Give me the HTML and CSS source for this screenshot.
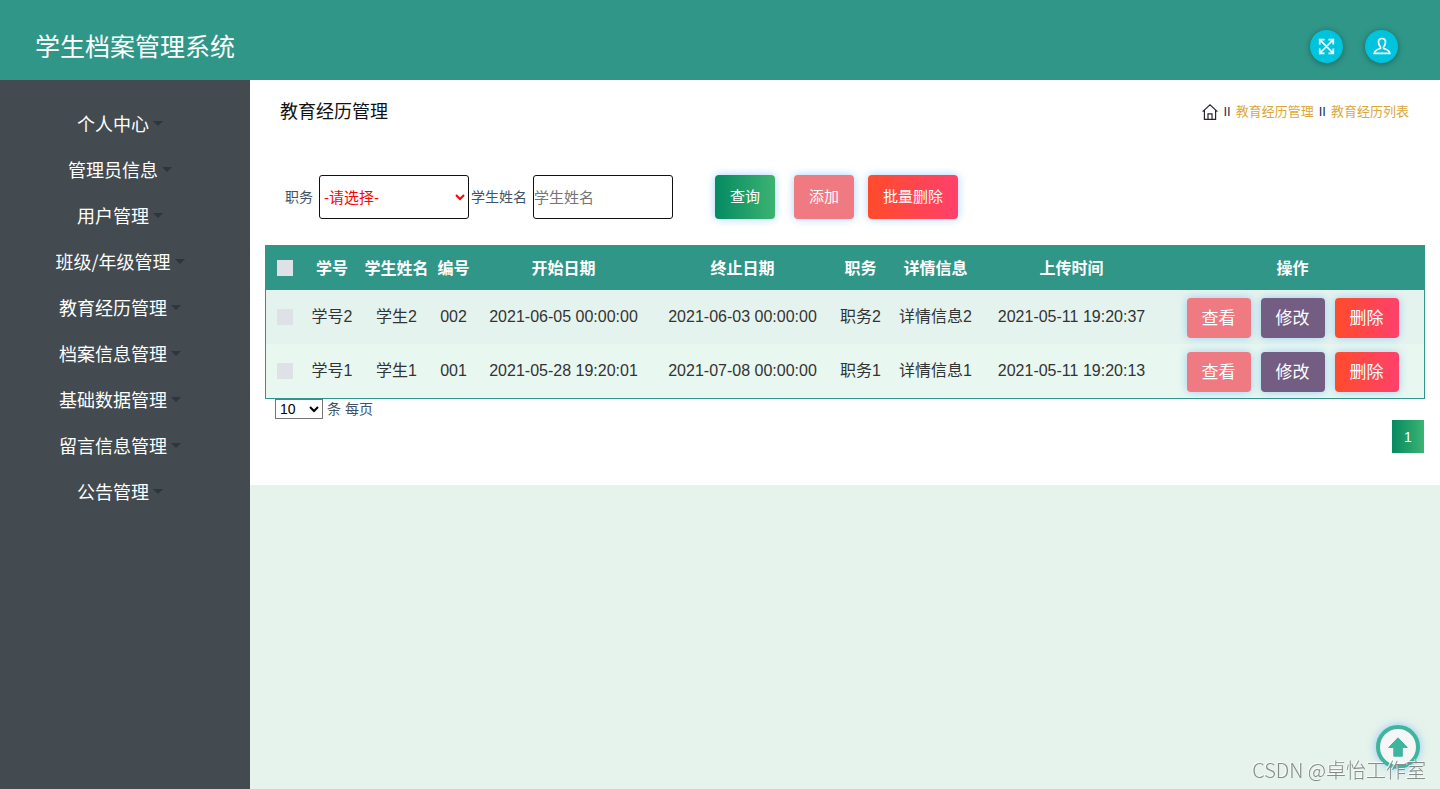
FILE: index.html
```html
<!DOCTYPE html>
<html lang="zh-CN">
<head>
<meta charset="utf-8">
<title>学生档案管理系统</title>
<link rel="stylesheet" href="styles.css">
</head>
<body>
<header class="topbar">
  <h1 class="brand">学生档案管理系统</h1>
  <div class="top-actions">
    <button class="round-btn" type="button" aria-label="全屏">
      <svg width="17" height="17" viewBox="0 0 17 17" fill="none" stroke="#fff" stroke-width="1.700"><path d="M2 2l13 13M15 2L2 15M1.700 6.500V1.700H6.500M10.500 1.700h4.800v4.800M15.300 10.500v4.800h-4.800M6.500 15.300H1.700v-4.800"/></svg>
    </button>
    <button class="round-btn" type="button" aria-label="个人中心">
      <svg width="18" height="18" viewBox="0 0 18 18" fill="none" stroke="#fff" stroke-width="1.700"><path d="M9 1.500C6.700 1.500 5.500 3 5.500 5c0 2 .7 3.700 1.900 4.800v1.700C5 12.300 1.500 13 1.200 16.300h15.600C16.500 13 13 12.300 10.600 11.500V9.800C11.800 8.700 12.500 7 12.500 5c0-2-1.200-3.500-3.500-3.500z"/></svg>
    </button>
  </div>
</header>
<div class="layout">
  <nav class="sidebar">
    <ul class="menu">
      <li><a class="menu-link" href="#">个人中心</a></li>
      <li><a class="menu-link" href="#">管理员信息</a></li>
      <li><a class="menu-link" href="#">用户管理</a></li>
      <li><a class="menu-link" href="#">班级/年级管理</a></li>
      <li><a class="menu-link" href="#">教育经历管理</a></li>
      <li><a class="menu-link" href="#">档案信息管理</a></li>
      <li><a class="menu-link" href="#">基础数据管理</a></li>
      <li><a class="menu-link" href="#">留言信息管理</a></li>
      <li><a class="menu-link" href="#">公告管理</a></li>
    </ul>
  </nav>
  <main class="content">
    <section class="panel">
      <div class="page-head">
        <h2 class="page-title">教育经历管理</h2>
        <div class="crumbs">
          <a class="home" href="#" aria-label="首页"><svg width="16" height="16" viewBox="0 0 16 16" fill="none" stroke="#2b2333" stroke-width="1.200"><path d="M.6 7.600L8 .9l7.400 6.700M2.400 6.200v9.200h11.200V6.200M6 15.400V9.800h4v5.600"/></svg></a>
          <span class="sep">II</span>
          <a class="crumb" href="#">教育经历管理</a>
          <span class="sep">II</span>
          <a class="crumb" href="#">教育经历列表</a>
        </div>
      </div>
      <form class="filters">
        <label class="label-job" for="job">职务</label>
        <select class="field job" id="job"><option>-请选择-</option></select>
        <label class="label-name" for="name">学生姓名</label>
        <input class="field name" id="name" type="text" placeholder="学生姓名">
        <button class="btn btn-query" type="button">查询</button>
        <button class="btn btn-pink btn-add" type="button">添加</button>
        <button class="btn btn-red" type="button">批量删除</button>
      </form>
      <table class="grid">
        <colgroup>
          <col class="c-check"><col class="c-no"><col class="c-student"><col class="c-code"><col class="c-date"><col class="c-date"><col class="c-job"><col class="c-detail"><col class="c-date"><col class="c-ops">
        </colgroup>
        <thead>
          <tr><th><input class="tick" type="checkbox" aria-label="全选"></th><th>学号</th><th>学生姓名</th><th>编号</th><th>开始日期</th><th>终止日期</th><th>职务</th><th>详情信息</th><th>上传时间</th><th>操作</th></tr>
        </thead>
        <tbody>
          <tr>
            <td><input class="tick" type="checkbox" aria-label="选择 学号2"></td><td>学号2</td><td>学生2</td><td>002</td><td>2021-06-05 00:00:00</td><td>2021-06-03 00:00:00</td><td>职务2</td><td>详情信息2</td><td>2021-05-11 19:20:37</td>
            <td><div class="ops"><button class="btn btn-row btn-pink" type="button">查看</button><button class="btn btn-row btn-purple" type="button">修改</button><button class="btn btn-row btn-red" type="button">删除</button></div></td>
          </tr>
          <tr>
            <td><input class="tick" type="checkbox" aria-label="选择 学号1"></td><td>学号1</td><td>学生1</td><td>001</td><td>2021-05-28 19:20:01</td><td>2021-07-08 00:00:00</td><td>职务1</td><td>详情信息1</td><td>2021-05-11 19:20:13</td>
            <td><div class="ops"><button class="btn btn-row btn-pink" type="button">查看</button><button class="btn btn-row btn-purple" type="button">修改</button><button class="btn btn-row btn-red" type="button">删除</button></div></td>
          </tr>
        </tbody>
      </table>
      <div class="page-size">
        <select class="size-select" id="size"><option>10</option></select>
        <label for="size">条 每页</label>
      </div>
      <div class="pager"><button class="page-btn" type="button">1</button></div>
    </section>
  </main>
</div>
<button class="to-top" type="button" aria-label="返回顶部">
  <svg width="20" height="20" viewBox="0 0 20 20" fill="#3fb59e" stroke="#3fb59e" stroke-width="1" stroke-linejoin="round"><path d="M10 .8L19.300 10.500h-5v8.700H5.800v-8.700H.7z"/></svg>
</button>
<div class="watermark">CSDN @卓怡工作室</div>
</body>
</html>
```
FILE: styles.css
```css
* { box-sizing: border-box; }
body {
  margin: 0;
  min-height: 100vh;
  display: flex;
  flex-direction: column;
  background: #e6f3ec;
  color: #3e5569;
  font-family: "Liberation Sans", "Noto Sans CJK SC", sans-serif;
  font-size: 14px;
}
button, input, select { font-family: inherit; margin: 0; }
button { cursor: pointer; }
a { text-decoration: none; }

.topbar {
  display: flex;
  align-items: center;
  justify-content: space-between;
  height: 80px;
  padding: 12px 42px 0 35px;
  background: #309688;
}
.brand { margin: 0; color: #fff; font-size: 25px; font-weight: 400; line-height: 36px; padding-top: 2px; }
.top-actions { display: flex; gap: 22px; }
.round-btn {
  display: flex;
  align-items: center;
  justify-content: center;
  width: 33px;
  height: 33px;
  padding: 0;
  border: 0;
  border-radius: 50%;
  background: #00c4de;
  box-shadow: 0 1px 6px rgba(0, 0, 0, .35);
}

.layout { flex: 1; display: flex; }
.sidebar { flex: 0 0 250px; padding: 20px 10px 0 0; background: #434b50; }
.menu { margin: 0; padding: 0; list-style: none; }
.menu-link {
  display: flex;
  align-items: center;
  justify-content: center;
  gap: 4px;
  height: 46px;
  color: #fff;
  font-family: "Noto Sans CJK SC", sans-serif;
  font-size: 18px;
}
.menu-link::after {
  content: "";
  border: 5px solid transparent;
  border-top-color: #2f3538;
  border-bottom: 0;
}

.content { flex: 1; min-width: 0; }
.panel { padding: 20px 15px 32px; background: #fff; }
.page-head {
  display: flex;
  align-items: center;
  justify-content: space-between;
  height: 24px;
  padding: 0 16px 0 15px;
}
.page-title { margin: 0; color: #111; font-size: 18px; font-weight: 400; line-height: 24px; }
.crumbs { display: flex; align-items: center; gap: 5px; font-size: 13px; line-height: 18px; color: #1f2d4d; }
.home { display: flex; margin-right: 1px; }
.crumb { color: #dda73a; }

.filters { display: flex; align-items: center; padding: 51px 20px 26px; }
.label-job, .label-name { padding-bottom: 3px; }
.label-job { margin-right: 6px; }
.label-name { margin: 0 6px 0 2px; }
.field {
  height: 44px;
  padding: 0;
  border: 1px solid #111;
  border-radius: 3px;
  background: #fff;
  font-size: 15px;
}
.job { width: 150px; color: #f00; }
.name { width: 140px; }
.name::placeholder { color: #757575; }
.btn {
  height: 44px;
  padding: 0 15px 3px;
  border: 0;
  border-radius: 4px;
  color: #fff;
  font-size: 15px;
  box-shadow: 0 0 8px rgba(110, 180, 245, .6);
}
.btn-query { margin-left: 42px; background: linear-gradient(90deg, #058a62, #3cb371); }
.btn-add { margin: 0 14px 0 19px; }
.btn-pink { background: #f07a82; }
.btn-purple { background: #735d83; }
.btn-red { background: linear-gradient(90deg, #ff4b2b, #ff416c); }

.grid {
  width: 100%;
  table-layout: fixed;
  border-spacing: 0;
  border: 1px solid #309688;
  color: #333;
  font-size: 16px;
  text-align: center;
  white-space: nowrap;
}
.c-check { width: 38px; }
.c-no { width: 56px; }
.c-student { width: 73px; }
.c-code { width: 41px; }
.c-date { width: 179px; }
.c-job { width: 57px; }
.c-detail { width: 93px; }
.c-ops { width: 263px; }
.grid th { height: 44px; padding: 0 0 2px; background: #309688; color: #fff; }
.grid td { height: 54px; padding: 0; background: #e5f3ee; line-height: 20px; }
.grid tbody tr:nth-child(2) td { background: #e8f7f0; }
.tick {
  appearance: none;
  display: block;
  width: 16px;
  height: 16px;
  margin: 0 auto;
  background: #dee1e6;
}
.grid th .tick { margin-top: 2px; }
.ops { display: flex; justify-content: center; gap: 10px; padding-top: 2px; }
.btn-row { height: 40px; width: 64px; padding: 0 0 3px; font-size: 17px; }

.page-size { display: flex; align-items: center; gap: 4px; height: 20px; padding-left: 10px; }
.page-size label { padding-bottom: 2px; }
.size-select { width: 48px; height: 20px; padding: 0; background: #fff; color: #000; font-size: 14px; }
.pager { display: flex; justify-content: flex-end; padding: 1px 1px 0 0; }
.page-btn {
  width: 32px;
  height: 33px;
  padding: 0;
  border: 0;
  background: linear-gradient(90deg, #058a62, #3cb371);
  color: #fff;
  font-size: 14px;
}

.to-top {
  position: fixed;
  right: 20px;
  bottom: 20px;
  display: flex;
  align-items: center;
  justify-content: center;
  width: 44px;
  height: 44px;
  padding: 0;
  border: 4px solid #3fb59e;
  border-radius: 50%;
  background: #f5f6f6;
  box-shadow: 0 0 8px rgba(110, 180, 245, .7);
}
.watermark {
  position: fixed;
  right: 14px;
  bottom: 4px;
  color: #858b8a;
  font-family: "Noto Sans CJK SC", sans-serif;
  font-size: 20px;
  font-weight: 300;
  line-height: 30px;
  text-shadow: -1px -1px 0 rgba(255, 255, 255, .8);
  pointer-events: none;
}
```
